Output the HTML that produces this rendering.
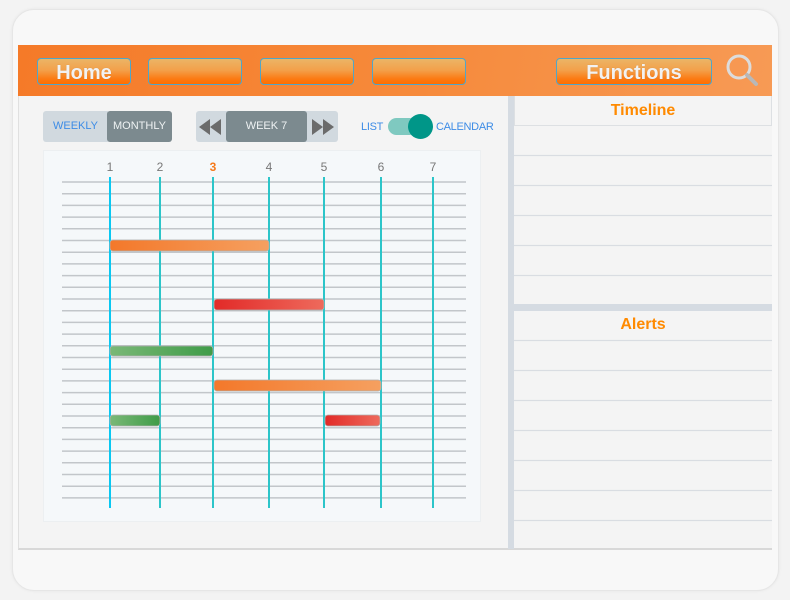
<!DOCTYPE html>
<html><head><meta charset="utf-8"><style>
*{margin:0;padding:0;box-sizing:border-box}
body{width:790px;height:600px;background:#f3f3f3;font-family:"Liberation Sans",Arial,sans-serif;position:relative;overflow:hidden}
.abs{position:absolute}
.dev{left:12px;top:9px;width:767px;height:582px;background:#f8f8f8;border-radius:22px;border:1px solid #e6e6e6;box-shadow:0 0 3px rgba(0,0,0,.06)}
.scr{left:18px;top:45px;width:754px;height:505px;background:#f4f4f4;border-bottom:2px solid #d8d8d8;border-left:1px solid #e0e0e0}
.hdr{left:18px;top:45px;width:754px;height:51px;background:linear-gradient(100deg,#f57a28,#f6893a 50%,#f79a55)}
.btn{height:27px;top:58px;border:1.5px solid #4fa6c9;border-radius:4px;background:linear-gradient(#ebb566,#f3a04a 45%,#fb7a12 80%,#ff6e00);color:#f2f2f2;font-weight:bold;font-size:20px;text-align:center;line-height:28px;text-shadow:0 0 1px rgba(0,0,0,.15)}
.seg{top:111px;height:31px;font-size:11px;line-height:31px;text-align:center}
.lt{background:#d1d9df;color:#3d8ce6}
.dk{background:#7c8a8f;color:#eef2f3;border-radius:3px}
.lbl{top:121px;font-size:11px;color:#3d8ce6;letter-spacing:-0.3px}
.ttl{color:#ff8a00;font-weight:bold;font-size:16px;text-align:center;width:258px;left:514px}
</style></head><body>
<div class="abs dev"></div>
<div class="abs scr"></div>
<div class="abs" style="left:43px;top:150px;width:438px;height:372px;background:#f5f8fa;border:1px solid #eceff1"></div>
<div class="abs" style="left:514px;top:96px;width:258px;height:30px;border:1px solid #dde0e3;border-top:none"></div>
<div class="abs hdr"></div>
<div class="abs btn" style="left:37px;width:94px">Home</div>
<div class="abs btn" style="left:148px;width:94px"></div>
<div class="abs btn" style="left:260px;width:94px"></div>
<div class="abs btn" style="left:372px;width:94px"></div>
<div class="abs btn" style="left:556px;width:156px">Functions</div>

<div class="abs seg lt" style="left:43px;width:65px;border-radius:3px 0 0 3px">WEEKLY</div>
<div class="abs seg dk" style="left:107px;width:65px">MONTHLY</div>
<div class="abs seg lt" style="left:196px;width:142px;border-radius:3px"></div>
<div class="abs seg dk" style="left:226px;width:81px">WEEK 7</div>
<div class="abs lbl" style="left:361px">LIST</div>
<div class="abs lbl" style="left:436px">CALENDAR</div>
<div class="abs" style="left:388px;top:118px;width:30px;height:17px;border-radius:9px;background:#7fc9c0"></div>
<div class="abs" style="left:408px;top:114px;width:25px;height:25px;border-radius:50%;background:#009688"></div>

<div class="abs ttl" style="top:102px">Timeline</div>
<div class="abs ttl" style="top:316px">Alerts</div>

<svg class="abs" style="left:0;top:0" width="790" height="600">
<g fill="#6b6b6b">
<polygon points="199,127 210,119 210,135"/><polygon points="210,127 221,119 221,135"/>
<polygon points="323,127 312,119 312,135"/><polygon points="334,127 323,119 323,135"/>
</g>
<g stroke="#d9dde2" stroke-width="1.2">
<line x1="514" y1="155.5" x2="772" y2="155.5"/><line x1="514" y1="185.5" x2="772" y2="185.5"/>
<line x1="514" y1="215.5" x2="772" y2="215.5"/><line x1="514" y1="245.5" x2="772" y2="245.5"/>
<line x1="514" y1="275.5" x2="772" y2="275.5"/>
<line x1="514" y1="340.5" x2="772" y2="340.5"/><line x1="514" y1="370.5" x2="772" y2="370.5"/>
<line x1="514" y1="400.5" x2="772" y2="400.5"/><line x1="514" y1="430.5" x2="772" y2="430.5"/>
<line x1="514" y1="460.5" x2="772" y2="460.5"/><line x1="514" y1="490.5" x2="772" y2="490.5"/>
<line x1="514" y1="520.5" x2="772" y2="520.5"/>
</g>
<rect x="508" y="96" width="6" height="453" fill="#d5dbe2"/>
<rect x="514" y="304" width="258" height="7" fill="#d5dbe2"/>
<g stroke="#c2c6ca" stroke-width="1.5">
<line x1="62" y1="182" x2="466" y2="182"/><line x1="62" y1="193.7" x2="466" y2="193.7"/><line x1="62" y1="205.4" x2="466" y2="205.4"/><line x1="62" y1="217.1" x2="466" y2="217.1"/><line x1="62" y1="228.8" x2="466" y2="228.8"/><line x1="62" y1="240.5" x2="466" y2="240.5"/><line x1="62" y1="252.2" x2="466" y2="252.2"/><line x1="62" y1="263.9" x2="466" y2="263.9"/><line x1="62" y1="275.6" x2="466" y2="275.6"/><line x1="62" y1="287.3" x2="466" y2="287.3"/><line x1="62" y1="299" x2="466" y2="299"/><line x1="62" y1="310.7" x2="466" y2="310.7"/><line x1="62" y1="322.4" x2="466" y2="322.4"/><line x1="62" y1="334.1" x2="466" y2="334.1"/><line x1="62" y1="345.8" x2="466" y2="345.8"/><line x1="62" y1="357.5" x2="466" y2="357.5"/><line x1="62" y1="369.2" x2="466" y2="369.2"/><line x1="62" y1="380.9" x2="466" y2="380.9"/><line x1="62" y1="392.6" x2="466" y2="392.6"/><line x1="62" y1="404.3" x2="466" y2="404.3"/><line x1="62" y1="416" x2="466" y2="416"/><line x1="62" y1="427.7" x2="466" y2="427.7"/><line x1="62" y1="439.4" x2="466" y2="439.4"/><line x1="62" y1="451.1" x2="466" y2="451.1"/><line x1="62" y1="462.8" x2="466" y2="462.8"/><line x1="62" y1="474.5" x2="466" y2="474.5"/><line x1="62" y1="486.2" x2="466" y2="486.2"/><line x1="62" y1="497.9" x2="466" y2="497.9"/>
</g>
<g stroke="#2cc5c9" stroke-width="2">
<line x1="110" y1="177" x2="110" y2="508" stroke="#0ac8f2"/>
<line x1="160" y1="177" x2="160" y2="508"/><line x1="213" y1="177" x2="213" y2="508"/>
<line x1="269" y1="177" x2="269" y2="508"/><line x1="324" y1="177" x2="324" y2="508"/>
<line x1="381" y1="177" x2="381" y2="508"/><line x1="433" y1="177" x2="433" y2="508"/>
</g>
<g font-family="Liberation Sans,Arial,sans-serif" font-size="12" fill="#777" text-anchor="middle">
<text x="110" y="171">1</text><text x="160" y="171">2</text><text x="213" y="171" fill="#f57a1c" font-weight="bold">3</text>
<text x="269" y="171">4</text><text x="324" y="171">5</text><text x="381" y="171">6</text><text x="433" y="171">7</text>
</g>
<defs>
<linearGradient id="o" x1="0" x2="1"><stop offset="0" stop-color="#f4782a"/><stop offset="1" stop-color="#f5a060"/></linearGradient>
<linearGradient id="r" x1="0" x2="1"><stop offset="0" stop-color="#e22a28"/><stop offset="1" stop-color="#ee6a5c"/></linearGradient>
<linearGradient id="g" x1="0" x2="1"><stop offset="0" stop-color="#7ab877"/><stop offset="1" stop-color="#3f9c48"/></linearGradient>
</defs>
<g stroke="#b0b0b0" stroke-width="0.8">
<rect x="110" y="240" width="159" height="11" rx="3" fill="url(#o)"/>
<rect x="214" y="299" width="110" height="11" rx="3" fill="url(#r)"/>
<rect x="110" y="346" width="103" height="10" rx="3" fill="url(#g)"/>
<rect x="214" y="380" width="167" height="11" rx="3" fill="url(#o)"/>
<rect x="110" y="415" width="50" height="11" rx="3" fill="url(#g)"/>
<rect x="325" y="415" width="55" height="11" rx="3" fill="url(#r)"/>
</g>
<circle cx="739" cy="67" r="11" fill="none" stroke="#dcdcdc" stroke-width="3"/>
<line x1="747" y1="75" x2="756" y2="84" stroke="#b8b8b8" stroke-width="4" stroke-linecap="round"/>
</svg>
</body></html>
